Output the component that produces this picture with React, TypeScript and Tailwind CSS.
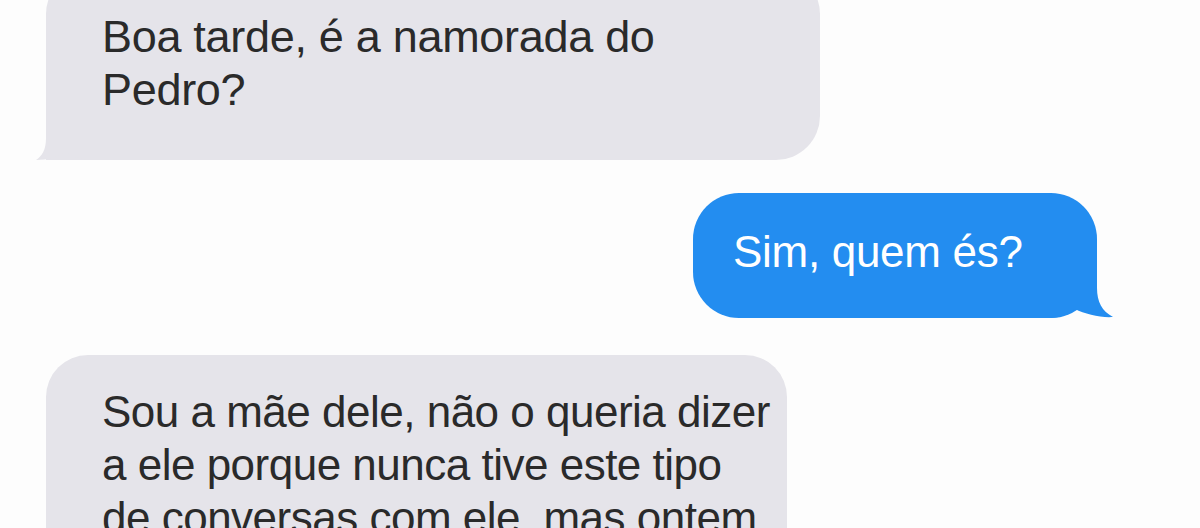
import React from "react";

export default function App() {
  return (
    <div className="w-[1200px] h-[528px] overflow-hidden bg-[#fdfdfd] flex flex-col font-['Liberation_Sans',Arial,sans-serif]">
      {/* Incoming bubble 1 */}
      <div className="relative self-start ml-[46px] -mt-[30px] w-[774px] pt-[40px] pb-[44px] pl-[56px] rounded-[44px] rounded-bl-none bg-[#e5e4ea]">
        <p className="text-[45px] leading-[53px] tracking-[-0.3px] text-[#2a2a2a]">
          Boa tarde, é a namorada do
          <br />
          Pedro?
        </p>
        <svg
          className="absolute left-[-10px] bottom-0"
          width="60"
          height="40"
          viewBox="0 0 60 40"
        >
          <path
            d="M60 0 H10 V18 C10 30 6 36 0 40 C12 40 22 37 30 32 C38 38 48 40 60 40 Z"
            fill="#e5e4ea"
          />
        </svg>
      </div>

      {/* Outgoing bubble */}
      <div className="relative self-start ml-[693px] mt-[33px] w-[404px] pt-[32px] pb-[40px] pl-[40px] rounded-[46px] bg-[#238df0]">
        <p className="text-[44px] leading-[53px] tracking-[-0.3px] text-white">
          Sim, quem és?
        </p>
        <svg
          className="absolute right-[-17px] bottom-0"
          width="64"
          height="50"
          viewBox="0 0 64 50"
        >
          <path
            d="M0 0 H47 V20 C47 34 52 43 63 49 C51 50 35 46 25 41 C18 46 10 50 0 50 Z"
            fill="#238df0"
          />
        </svg>
      </div>

      {/* Incoming bubble 2 */}
      <div className="self-start ml-[46px] mt-[37px] w-[741px] pt-[30px] pb-[40px] pl-[56px] rounded-[42px] rounded-bl-none bg-[#e5e4ea] shrink-0">
        <p className="text-[44px] leading-[53px] tracking-[-0.5px] text-[#2a2a2a]">
          Sou a mãe dele, não o queria dizer
          <br />
          a ele porque nunca tive este tipo
          <br />
          de conversas com ele, mas ontem
        </p>
      </div>
    </div>
  );
}
